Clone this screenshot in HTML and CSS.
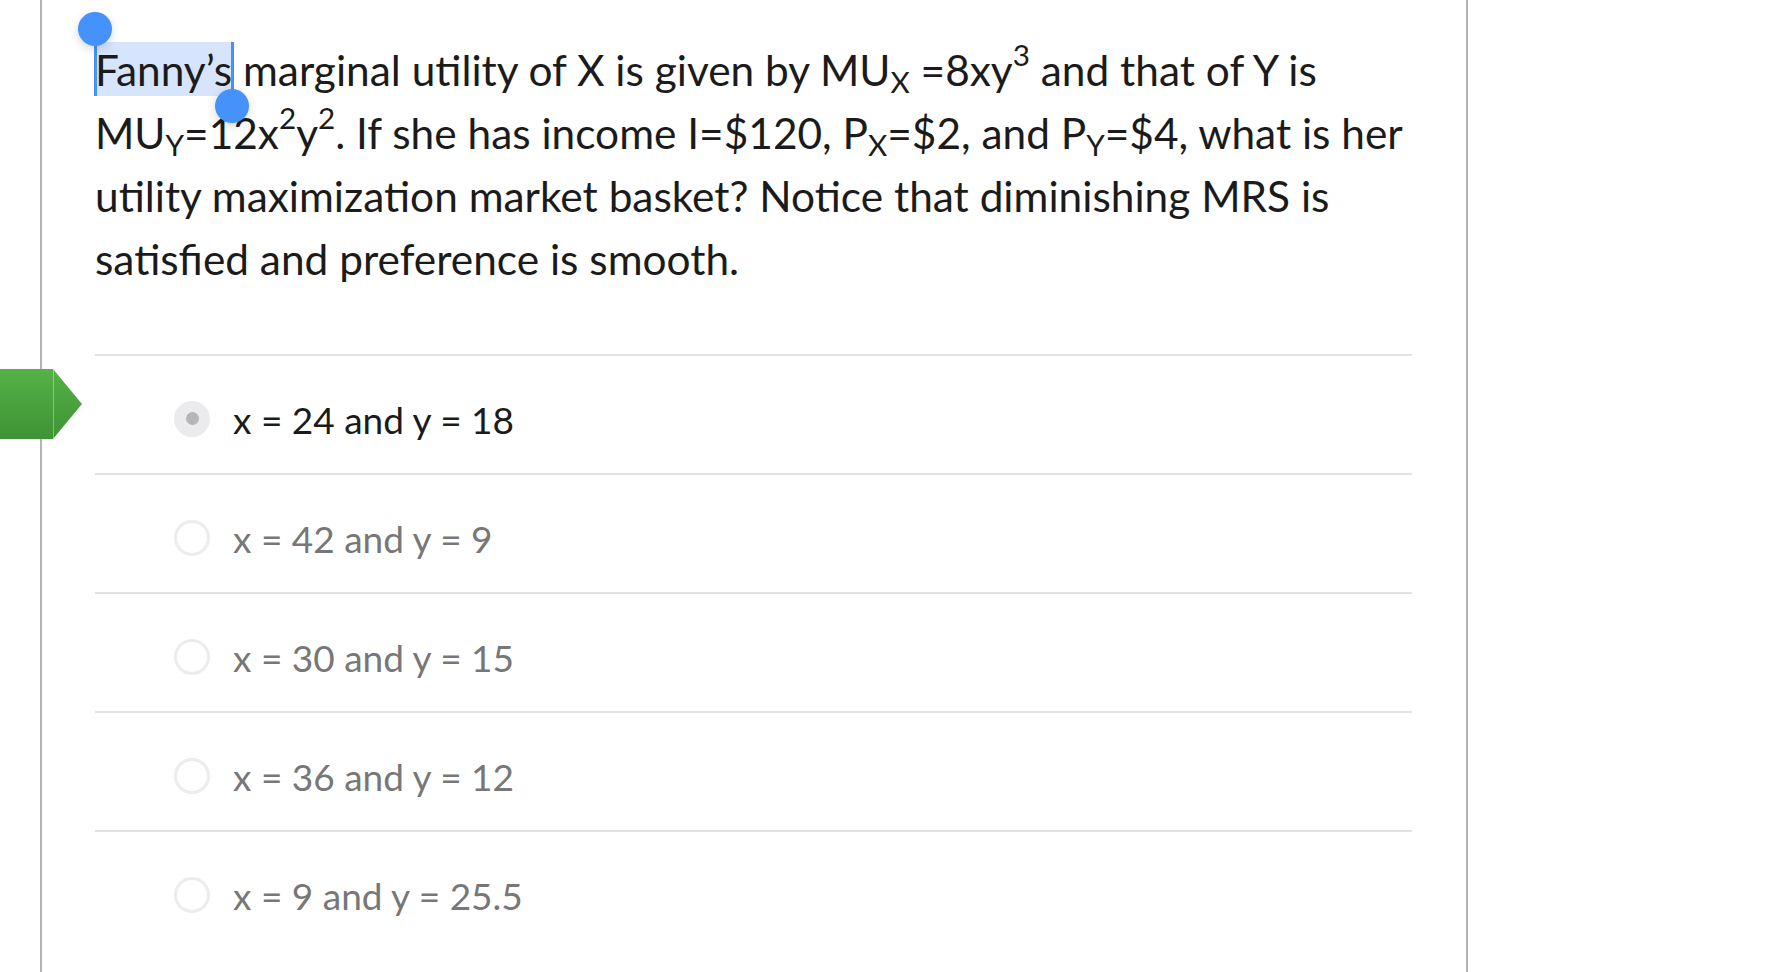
FILE: index.html
```html
<!DOCTYPE html>
<html lang="en">
<head>
<meta charset="utf-8">
<title>Quiz question</title>
<link rel="stylesheet" href="styles.css">
</head>
<body>
<div class="page">
  <div class="question">
    <p class="prompt"><span class="sel"><span class="handle handle-start"></span>Fanny’s<span class="handle handle-end"></span></span> marginal utility of X is given by MU<sub>X</sub> =8xy<sup>3</sup> and that of Y is MU<sub>Y</sub>=12x<sup>2</sup>y<sup>2</sup>. If she has income I=$120, P<sub>X</sub>=$2, and P<sub>Y</sub>=$4, what is her utility maximization market basket? Notice that diminishing MRS is satisfied and preference is smooth.</p>
    <div class="answers">
      <div class="answer selected">
        <span class="marker"></span>
        <span class="radio"></span>
        <span class="label">x = 24 and y = 18</span>
      </div>
      <div class="answer">
        <span class="radio"></span>
        <span class="label">x = 42 and y = 9</span>
      </div>
      <div class="answer">
        <span class="radio"></span>
        <span class="label">x = 30 and y = 15</span>
      </div>
      <div class="answer">
        <span class="radio"></span>
        <span class="label">x = 36 and y = 12</span>
      </div>
      <div class="answer">
        <span class="radio"></span>
        <span class="label">x = 9 and y = 25.5</span>
      </div>
    </div>
  </div>
</div>
</body>
</html>
```
FILE: styles.css
```css
html, body {
  margin: 0;
  padding: 0;
  background: #ffffff;
}
body {
  font-family: Lato, "Open Sans", "Liberation Sans", sans-serif;
  color: #1b1b1b;
  overflow: hidden;
}
.page {
  width: 1768px;
  height: 972px;
}
.question {
  margin-left: 40px;
  width: 1428px;
  height: 972px;
  box-sizing: border-box;
  border-left: 2px solid #b3b3b3;
  border-right: 2px solid #b3b3b3;
  padding: 38px 56px 0 53px;
}
.prompt {
  margin: 0;
  font-size: 42.4px;
  line-height: 63px;
  width: 1330px;
}
.prompt sub {
  font-size: 0.7em;
  vertical-align: -0.22em;
  line-height: 0;
}
.prompt sup {
  font-size: 0.7em;
  vertical-align: 0.66em;
  line-height: 0;
}
.sel {
  position: relative;
  background: #d6e5fb;
  padding: 2px 0 1px;
}
.sel::before,
.sel::after {
  content: "";
  position: absolute;
  width: 3px;
  background: #4592fb;
  top: 0;
  bottom: 0;
}
.sel::before { left: -1px; }
.sel::after { right: -2px; }
.handle {
  position: absolute;
  width: 34px;
  height: 34px;
  border-radius: 50%;
  background: #4592fb;
  box-shadow: 0 3px 10px rgba(0, 0, 0, 0.16);
  z-index: 1;
}
.handle-start {
  left: -17px;
  top: -30px;
}
.handle-end {
  right: -17px;
  bottom: -27px;
}
.answers {
  margin-top: 64px;
  width: 1317px;
}
.answer {
  position: relative;
  height: 119px;
  border-top: 2px solid #e2e2e2;
  box-sizing: border-box;
  display: flex;
  align-items: center;
  padding: 10px 0 0 79px;
  font-size: 37px;
  color: #777777;
}
.answer.selected {
  color: #1b1b1b;
}
.radio {
  width: 36px;
  height: 36px;
  box-sizing: border-box;
  border-radius: 50%;
  border: 3px solid #ececec;
  background: #ffffff;
  margin-right: 23px;
  margin-top: -2px;
  flex: none;
  display: flex;
  align-items: center;
  justify-content: center;
}
.answer.selected .radio {
  border: none;
  background: #ebebed;
}
.answer.selected .radio::after {
  content: "";
  width: 13px;
  height: 13px;
  border-radius: 50%;
  background: #b6b6ba;
}
.marker {
  position: absolute;
  left: -95px;
  top: 13px;
  width: 82px;
  height: 70px;
  background: linear-gradient(#55b247, #3f9335);
  clip-path: polygon(0 0, 53px 0, 82px 50%, 53px 100%, 0 100%);
}
.marker::after {
  content: "";
  position: absolute;
  left: 53px;
  top: 0;
  bottom: 0;
  width: 1px;
  background: rgba(255, 255, 255, 0.35);
}
```
